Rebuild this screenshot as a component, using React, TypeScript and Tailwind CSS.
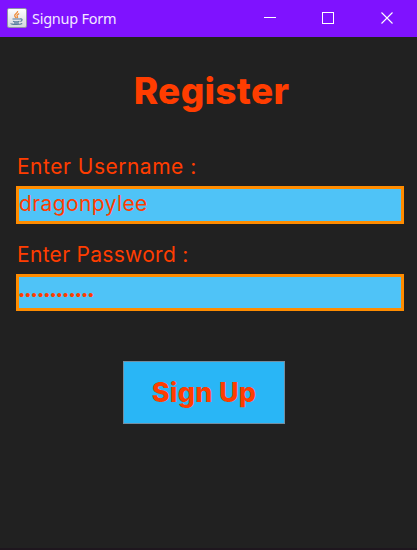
import React from "react";

function JavaIcon() {
  return (
    <svg width="20" height="20" viewBox="0 0 20 20" className="shrink-0">
      <defs>
        <linearGradient id="tile" x1="0" y1="0" x2="0" y2="1">
          <stop offset="0" stopColor="#ffffff" />
          <stop offset="1" stopColor="#d3d6dc" />
        </linearGradient>
      </defs>
      <rect x="0.5" y="0.5" width="19" height="19" rx="1.5" fill="url(#tile)" stroke="#8f93a8" />
      <path d="M10.6 3c.6 2-3.400 3-2.900 4.900.2.9 1.300 1.500 1.600 2.300M12.200 5.600c-1.500.7-2.500 1.300-2.100 2.300.3.700.900 1.200.1 2.200" fill="none" stroke="#ee8c3a" strokeWidth="1.300" />
      <path d="M5.500 11h7.500M6 13.200c2 .7 4.800.6 6.500 0M13 11c2.800-.6 2.600 1.900.3 2.500M4.200 15.300c-1 1.300 8.800 1.700 11 .2M7 15h5" fill="none" stroke="#587d9e" strokeWidth="1.200" />
    </svg>
  );
}

function TitleBar() {
  return (
    <header className="flex h-[37px] shrink-0 items-center bg-[#7f12ff] pb-px pl-[7px] text-[#f3e8ff]">
      <JavaIcon />
      <span className="ml-[5px] grow whitespace-nowrap font-['Noto_Sans',sans-serif] text-[14.500px] leading-5 tracking-[-0.250px]">
        Signup Form
      </span>
      <div className="mr-6 flex gap-[46px]">
        <svg width="12" height="12" viewBox="0 0 12 12">
          <path d="M0 5.500h12" stroke="#fff" />
        </svg>
        <svg width="13" height="12" viewBox="0 0 13 12">
          <rect x="0.5" y="0.500" width="11" height="11" fill="none" stroke="#fff" />
        </svg>
        <svg width="12" height="12" viewBox="0 0 12 12">
          <path d="M.5.5l11 11M11.500 .5L.5 11.500" stroke="#fff" strokeWidth="1.100" />
        </svg>
      </div>
    </header>
  );
}

export default function App() {
  return (
    <div className="flex h-[550px] w-[417px] flex-col overflow-hidden border-b-2 border-[#1e161e] bg-[#212121] font-['Inter',sans-serif] text-[#ff3d00]">
      <TitleBar />
      <main className="flex flex-col pl-4 pr-[13px]">
        <h1 className="mt-[30px] pl-[3px] text-center text-[37px] font-extrabold leading-[48px] tracking-[0.300px]">Register</h1>
        <label className="mt-[37px] h-[34px] whitespace-nowrap pl-px text-[21px] leading-[30px] tracking-[0.500px]">
          Enter Username :
        </label>
        <div className="h-[38px] border-[3px] border-[#ff8c00] bg-[#4fc3f7] text-[21px] leading-[29px] tracking-[0.400px]">
          dragonpylee
        </div>
        <label className="mt-4 h-[34px] whitespace-nowrap pl-px text-[21px] leading-[30px] tracking-[0.300px]">
          Enter Password :
        </label>
        <div className="h-[37px] border-[3px] border-[#ff8c00] bg-[#4fc3f7] font-['Liberation_Sans',sans-serif] text-[15px] leading-[35px] tracking-[1.050px]">
          ••••••••••••
        </div>
        <button className="ml-[107px] mt-[50px] h-[63px] w-[162px] border border-[#738da0] bg-[#29b6f6] text-[27px] font-extrabold leading-[60px] tracking-[0.300px]">
          Sign Up
        </button>
      </main>
    </div>
  );
}
